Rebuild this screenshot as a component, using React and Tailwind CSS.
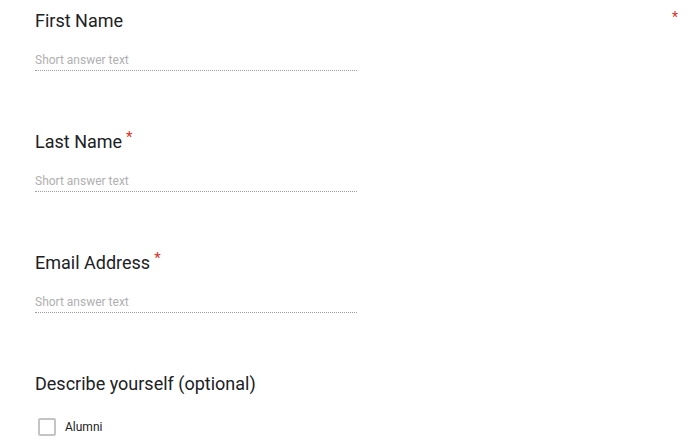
import React from "react";

const Asterisk = () => (
  <span className="ml-[4px] align-top text-[15px] leading-none text-[#d93025]">*</span>
);

const ShortAnswer = ({ label, required }) => (
  <div className="flex flex-col">
    <div className="h-6 text-[18px] leading-6 text-[#202124]">
      {label}
      {required && <Asterisk />}
    </div>
    <div className="mt-[19px] w-[322px] border-b border-dotted border-[#9e9e9e] pb-[2px] text-[12px] leading-4 text-[#b0b0b0]">
      Short answer text
    </div>
  </div>
);

export default function App() {
  return (
    <div
      className="min-h-[441px] w-full bg-white pl-[35px] pr-[22px] pt-[9px]"
      style={{ fontFamily: "Roboto, 'Liberation Sans', sans-serif" }}
    >
      <div className="flex justify-between">
        <ShortAnswer label="First Name" />
        <span className="mt-[1px] text-[14px] leading-none text-[#d93025]">*</span>
      </div>
      <div className="mt-[59px]">
        <ShortAnswer label="Last Name" required />
      </div>
      <div className="mt-[59px]">
        <ShortAnswer label="Email Address" required />
      </div>
      <div className="mt-[59px] flex flex-col">
        <div className="h-6 text-[18px] leading-6 text-[#202124]">
          Describe yourself (optional)
        </div>
        <label className="mt-[22px] flex items-center">
          <span className="ml-[3px] h-[18px] w-[18px] rounded-[2px] border-2 border-[#c4c4c4] bg-white" />
          <span className="ml-[9px] text-[12px] leading-4 text-[#202124]">Alumni</span>
        </label>
      </div>
    </div>
  );
}
